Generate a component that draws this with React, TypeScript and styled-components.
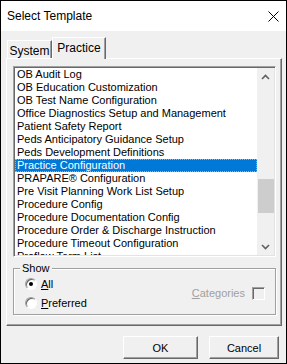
import { createGlobalStyle } from "styled-components";
import styled from "styled-components";

const GlobalStyle = createGlobalStyle`
  * { box-sizing: border-box; }
  body {
    margin: 0;
    font-family: "Liberation Sans", Arial, sans-serif;
    background: #f0f0f0;
  }
`;

const Janela = styled.div`
  width: 287px;
  height: 364px;
  border: 1px solid #000;
  background: #f0f0f0;
  display: flex;
  flex-direction: column;
`;

const BarraTitulo = styled.div`
  height: 30px;
  background: #fff;
  display: flex;
  align-items: center;
  justify-content: space-between;
  padding: 0 7px 0 6px;
  font-size: 12px;
  color: #000;
`;

const Corpo = styled.div`
  flex: 1;
  display: flex;
  flex-direction: column;
  padding: 6px 4px 0 5px;
`;

const LinhaAbas = styled.div`
  display: flex;
  align-items: flex-end;
  padding-left: 1px;
  height: 21px;
  position: relative;
  z-index: 1;
`;

const Aba = styled.div<{ $ativa?: boolean }>`
  height: ${(p) => (p.$ativa ? "22px" : "18px")};
  width: ${(p) => (p.$ativa ? "54px" : "45px")};
  margin-bottom: ${(p) => (p.$ativa ? "-1px" : "0")};
  background: #f0f0f0;
  border-top: 1px solid #fff;
  border-left: 1px solid #fff;
  border-right: 1px solid #696969;
  box-shadow: inset -1px 0 0 #a0a0a0;
  font-size: 12px;
  display: flex;
  justify-content: center;
  padding-top: 3px;
  color: #000;
`;

const Painel = styled.div`
  height: 268px;
  border-top: 1px solid #fff;
  border-left: 1px solid #fff;
  border-right: 1px solid #696969;
  border-bottom: 1px solid #696969;
  box-shadow: inset -1px -1px 0 #a0a0a0;
  padding: 7px 5px 0 6px;
  display: flex;
  flex-direction: column;
`;

const CaixaLista = styled.div`
  height: 191px;
  flex-shrink: 0;
  border-top: 1px solid #a0a0a0;
  border-left: 1px solid #a0a0a0;
  border-right: 1px solid #fff;
  border-bottom: 1px solid #fff;
  box-shadow: inset 1px 1px 0 #696969, inset -1px -1px 0 #e3e3e3;
  padding: 1px;
  display: flex;
  background: #fff;
`;

const Itens = styled.ul`
  flex: 1;
  margin: 0;
  padding: 0;
  list-style: none;
  overflow: hidden;
  background: #fff;
`;

const Item = styled.li<{ $selecionado?: boolean }>`
  height: 13px;
  line-height: 13px;
  font-size: 11px;
  padding-left: 2px;
  white-space: nowrap;
  color: ${(p) => (p.$selecionado ? "#fff" : "#000")};
  background: ${(p) => (p.$selecionado ? "#0078d7" : "transparent")};
  outline: ${(p) => (p.$selecionado ? "1px dotted #f5a03c" : "none")};
  outline-offset: -1px;
`;

const BarraRolagem = styled.div`
  width: 17px;
  background: #f0f0f0;
  display: flex;
  flex-direction: column;
`;

const BotaoSeta = styled.div`
  height: 17px;
  display: flex;
  align-items: center;
  justify-content: center;
`;

const Trilho = styled.div`
  flex: 1;
  padding-top: 94px;
`;

const Polegar = styled.div`
  height: 34px;
  margin-left: 1px;
  background: #cdcdcd;
`;

const Grupo = styled.fieldset`
  margin: 5px 0 0 0;
  padding: 2px 10px 5px 11px;
  border: 1px solid #a0a0a0;
  box-shadow: inset 1px 1px 0 #fff, 1px 1px 0 #fff;
  display: flex;
  align-items: center;
  justify-content: space-between;
`;

const Legenda = styled.legend`
  padding: 0 2px;
  margin-left: -5px;
  font-size: 11px;
  background: #f0f0f0;
  line-height: 13px;
`;

const ColunaRadios = styled.div`
  display: flex;
  flex-direction: column;
  gap: 6px;
`;

const LinhaRadio = styled.label`
  display: flex;
  align-items: center;
  gap: 4px;
  font-size: 11px;
  height: 13px;
`;

const Radio = styled.span<{ $marcado?: boolean }>`
  width: 12px;
  height: 12px;
  border-radius: 50%;
  border: 1px solid #a0a0a0;
  border-right-color: #fff;
  border-bottom-color: #fff;
  background: #fff;
  box-shadow: inset 1px 1px 0 #696969;
  display: flex;
  align-items: center;
  justify-content: center;

  &::after {
    content: "";
    width: 4px;
    height: 4px;
    border-radius: 50%;
    background: ${(p) => (p.$marcado ? "#000" : "transparent")};
  }
`;

const Categorias = styled.label`
  display: flex;
  align-items: center;
  gap: 7px;
  font-size: 11px;
  color: #a0a0a0;
`;

const CaixaMarcar = styled.span`
  width: 13px;
  height: 13px;
  border: 1px solid #a0a0a0;
  border-right-color: #fff;
  border-bottom-color: #fff;
  box-shadow: inset 1px 1px 0 #696969;
  background: #f0f0f0;
`;

const Sublinhado = styled.span`
  text-decoration: underline;
`;

const Rodape = styled.div`
  display: flex;
  justify-content: flex-end;
  gap: 11px;
  padding: 10px 3px 0 0;
`;

const Botao = styled.button<{ $largura: number }>`
  width: ${(p) => p.$largura}px;
  height: 23px;
  font-family: "Liberation Sans", Arial, sans-serif;
  font-size: 11px;
  color: #000;
  background: #f0f0f0;
  border-top: 1px solid #fff;
  border-left: 1px solid #fff;
  border-right: 1px solid #696969;
  border-bottom: 1px solid #696969;
  box-shadow: inset -1px -1px 0 #a0a0a0;
  padding: 0;
`;

const itens = [
  "OB Audit Log",
  "OB Education Customization",
  "OB Test Name Configuration",
  "Office Diagnostics Setup and Management",
  "Patient Safety Report",
  "Peds Anticipatory Guidance Setup",
  "Peds Development Definitions",
  "Practice Configuration",
  "PRAPARE® Configuration",
  "Pre Visit Planning Work List Setup",
  "Procedure Config",
  "Procedure Documentation Config",
  "Procedure Order & Discharge Instruction",
  "Procedure Timeout Configuration",
  "Proflow Term List",
];

function Seta({ paraCima }: { paraCima?: boolean }) {
  return (
    <svg width="9" height="6" viewBox="0 0 9 6">
      <path
        d={paraCima ? "M1 5 L4.5 1.5 L8 5" : "M1 1 L4.5 4.5 L8 1"}
        fill="none"
        stroke="#606060"
        strokeWidth="1.6"
      />
    </svg>
  );
}

function App() {
  return (
    <>
      <GlobalStyle />
      <Janela>
        <BarraTitulo>
          <span>Select Template</span>
          <svg width="11" height="11" viewBox="0 0 11 11">
            <path d="M0.5 0.5 L10.5 10.5 M10.5 0.5 L0.5 10.5" stroke="#000" strokeWidth="1" />
          </svg>
        </BarraTitulo>
        <Corpo>
          <LinhaAbas>
            <Aba>System</Aba>
            <Aba $ativa>Practice</Aba>
          </LinhaAbas>
          <Painel>
            <CaixaLista>
              <Itens>
                {itens.map((nome) => (
                  <Item key={nome} $selecionado={nome === "Practice Configuration"}>
                    {nome}
                  </Item>
                ))}
              </Itens>
              <BarraRolagem>
                <BotaoSeta>
                  <Seta paraCima />
                </BotaoSeta>
                <Trilho>
                  <Polegar />
                </Trilho>
                <BotaoSeta>
                  <Seta />
                </BotaoSeta>
              </BarraRolagem>
            </CaixaLista>
            <Grupo>
              <Legenda>Show</Legenda>
              <ColunaRadios>
                <LinhaRadio>
                  <Radio $marcado />
                  <span>
                    <Sublinhado>A</Sublinhado>ll
                  </span>
                </LinhaRadio>
                <LinhaRadio>
                  <Radio />
                  <span>
                    <Sublinhado>P</Sublinhado>referred
                  </span>
                </LinhaRadio>
              </ColunaRadios>
              <Categorias>
                <span>
                  <Sublinhado>C</Sublinhado>ategories
                </span>
                <CaixaMarcar />
              </Categorias>
            </Grupo>
          </Painel>
          <Rodape>
            <Botao $largura={75}>OK</Botao>
            <Botao $largura={70}>Cancel</Botao>
          </Rodape>
        </Corpo>
      </Janela>
    </>
  );
}

export default App;
